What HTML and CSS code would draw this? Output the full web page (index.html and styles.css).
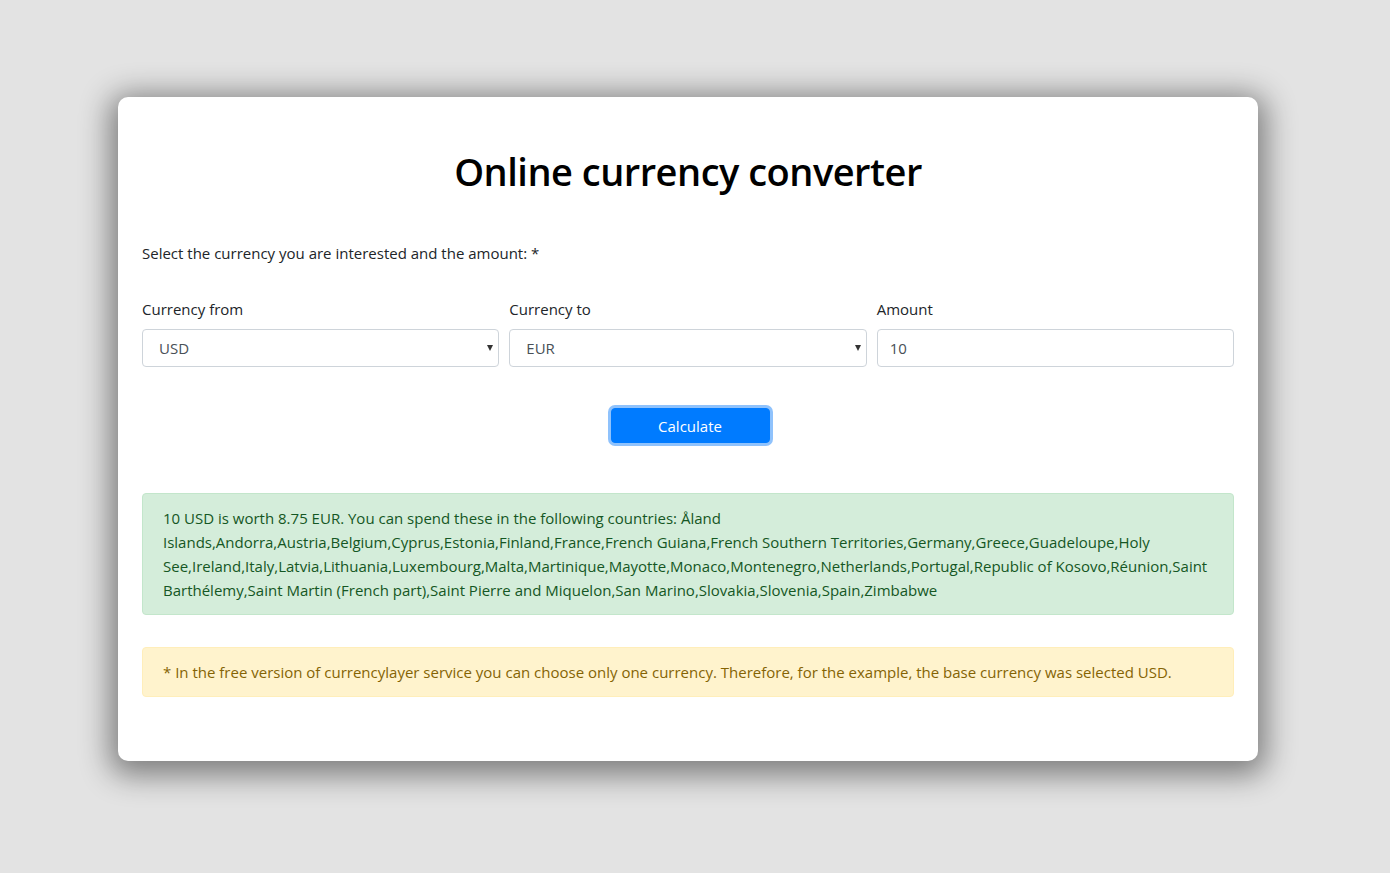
FILE: index.html
```html
<!DOCTYPE html>
<html lang="en">
<head>
<meta charset="utf-8">
<title>Online currency converter</title>
<link rel="stylesheet" href="styles.css">
</head>
<body>
<div class="page">
  <div class="card">
    <h1 class="title">Online currency converter</h1>
    <p class="intro">Select the currency you are interested and the amount: *</p>
    <div class="row">
      <div class="col">
        <label class="label">Currency from</label>
        <div class="select-wrap"><div class="control select">USD</div></div>
      </div>
      <div class="col">
        <label class="label">Currency to</label>
        <div class="select-wrap"><div class="control select">EUR</div></div>
      </div>
      <div class="col">
        <label class="label">Amount</label>
        <div class="control input">10</div>
      </div>
    </div>
    <div class="actions">
      <button class="btn">Calculate</button>
    </div>
    <div class="alert alert-success">10 USD is worth 8.75 EUR. You can spend these in the following countries: Åland Islands,Andorra,Austria,Belgium,Cyprus,Estonia,Finland,France,French Guiana,French Southern Territories,Germany,Greece,Guadeloupe,Holy See,Ireland,Italy,Latvia,Lithuania,Luxembourg,Malta,Martinique,Mayotte,Monaco,Montenegro,Netherlands,Portugal,Republic of Kosovo,Réunion,Saint Barthélemy,Saint Martin (French part),Saint Pierre and Miquelon,San Marino,Slovakia,Slovenia,Spain,Zimbabwe</div>
    <div class="alert alert-warning">* In the free version of currencylayer service you can choose only one currency. Therefore, for the example, the base currency was selected USD.</div>
  </div>
</div>
</body>
</html>
```
FILE: styles.css
```css
* { box-sizing: border-box; }
html, body { margin: 0; padding: 0; }
body {
  background: #e3e3e3;
  font-family: "Open Sans", "Noto Sans", sans-serif;
  font-size: 15px;
  color: #212529;
  height: 873px;
  overflow: hidden;
}
.page {
  padding: 97px 0 0 118px;
  display: flex;
}
.card {
  width: 1140px;
  height: 664px;
  background: #fff;
  border-radius: 10px;
  box-shadow: 0 6px 30px 8px rgba(0,0,0,0.45);
  padding: 48px 24px 0;
}
.title {
  margin: 0;
  text-align: center;
  font-size: 38px;
  font-weight: 600;
  line-height: 52px;
  color: #000;
  letter-spacing: -0.5px;
}
.intro {
  margin: 44px 0 0;
  line-height: 24px;
}
.row {
  margin-top: 32px;
  display: flex;
  gap: 10px;
}
.col { flex: 1; display: flex; flex-direction: column; }
.label {
  line-height: 24px;
  margin-bottom: 8px;
}
.select-wrap { position: relative; }
.select-wrap::after {
  content: "";
  position: absolute;
  right: 6px;
  top: 16px;
  border-left: 3.5px solid transparent;
  border-right: 3.5px solid transparent;
  border-top: 6px solid #333;
}
.control {
  height: 38px;
  border: 1px solid #ced4da;
  border-radius: 4px;
  line-height: 36px;
  color: #495057;
  background: #fff;
}
.select { padding-left: 16px; }
.input { padding-left: 12px; }
.actions {
  display: flex;
  justify-content: center;
  margin-top: 41px;
  padding-left: 4px;
}
.btn {
  width: 159px;
  height: 35px;
  background: #007bff;
  color: #fff;
  border: 1px solid #007bff;
  border-radius: 4px;
  font-family: inherit;
  font-size: 15px;
  box-shadow: 0 0 0 3px #8fc2fc;
  padding: 0;
}
.alert {
  border: 1px solid;
  border-radius: 4px;
  padding: 12px 20px;
  line-height: 24px;
}
.alert-success {
  margin-top: 50px;
  background: #d4edda;
  border-color: #c3e6cb;
  color: #155724;
}
.alert-warning {
  margin-top: 32px;
  background: #fff3cd;
  border-color: #ffeeba;
  color: #856404;
}
```
